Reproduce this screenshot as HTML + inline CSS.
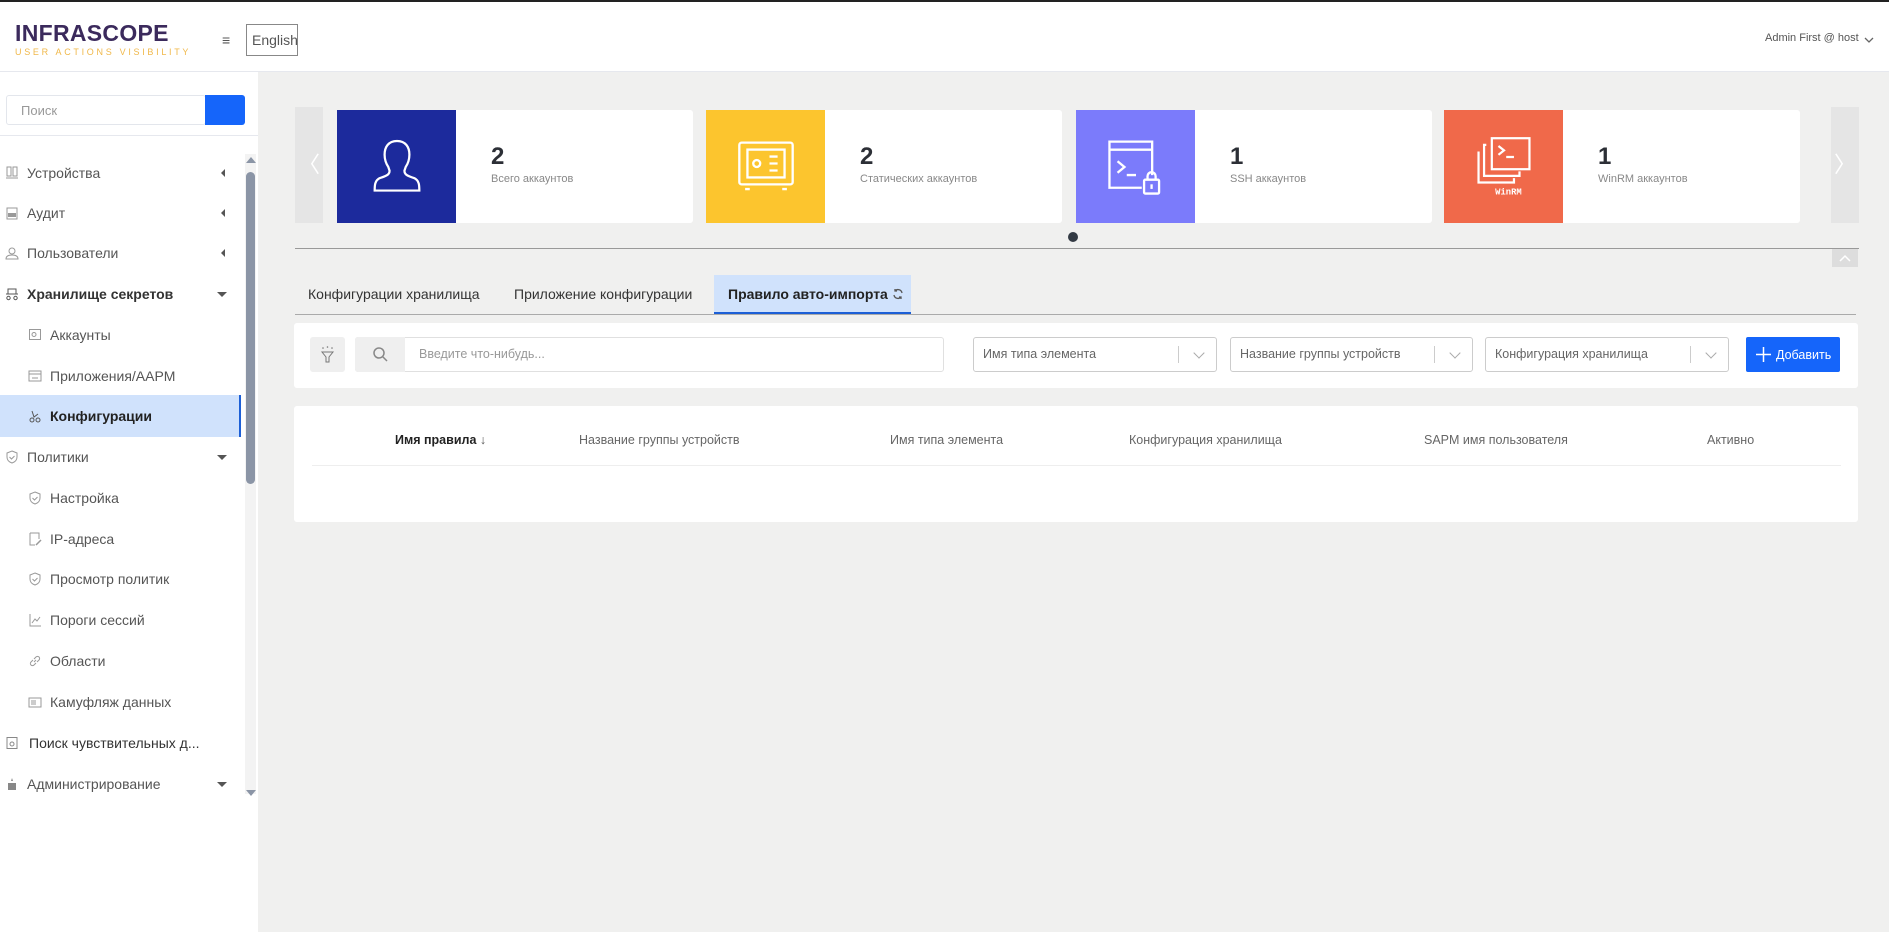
<!DOCTYPE html>
<html><head><meta charset="utf-8">
<style>
*{box-sizing:border-box;margin:0;padding:0}
body{width:1889px;height:932px;overflow:hidden;background:#f0f0ef;font-family:"Liberation Sans","DejaVu Sans",sans-serif;position:relative;color:#333}
.a{position:absolute}
.hdr{left:0;top:0;width:1889px;height:72px;background:#fff;border-top:2px solid #222;border-bottom:1px solid #e6e8ee}
.side{left:0;top:72px;width:258px;height:860px;background:#fff}
.mi{position:absolute;left:0;width:241px;height:40px;display:flex;align-items:center;font-size:14px;color:#555}
.mi svg{position:absolute;left:5px}
.mi span{position:absolute;left:27px}
.sub svg{left:28px}.sub span{left:50px}
.car{position:absolute;right:0;width:0;height:0;border-top:4px solid transparent;border-bottom:4px solid transparent;border-right:4px solid #555;left:221px}
.dn{position:absolute;left:217px;width:0;height:0;border-left:5px solid transparent;border-right:5px solid transparent;border-top:5px solid #555}
.card{top:110px;height:113px;width:356px;background:#fff;border-radius:3px}
.card .ic{position:absolute;left:0;top:0;width:119px;height:113px;display:flex;align-items:center;justify-content:center}
.card .n{position:absolute;left:154px;top:33px;font-size:24px;font-weight:bold;color:#2c2f36}
.card .l{position:absolute;left:154px;top:63px;font-size:11px;color:#888}
.sel{top:337px;height:35px;background:#fff;border:1px solid #ccc;border-radius:3px;font-size:12.5px;color:#666;padding:9px 9px}
.sel:after{content:"";position:absolute;right:37px;top:8px;height:17px;border-left:1px solid #ccc}
.sel i{position:absolute;right:13px;top:11px;width:8px;height:8px;border-right:1px solid #aaa;border-bottom:1px solid #aaa;transform:rotate(45deg)}
.th{top:433px;font-size:12.5px;color:#666}
.tab{top:286px;font-size:14px;color:#333}
</style></head><body>
<div class="a hdr">
 <div class="a" style="left:15px;top:18px;font-size:23px;font-weight:bold;color:#3b2a5c;letter-spacing:0.3px">INFRASCOPE</div>
 <div class="a" style="left:15px;top:45px;font-size:9px;color:#f0b84a;letter-spacing:2.7px">USER ACTIONS VISIBILITY</div>
 <div class="a" style="left:222px;top:30px;font-size:14px;color:#555">≡</div>
 <div class="a" style="left:246px;top:22px;width:52px;height:32px;border:1px solid #888;font-size:14px;color:#555;padding:7px 5px">English</div>
 <div class="a" style="left:1765px;top:30px;font-size:11px;color:#555">Admin First @ host</div>
 <svg class="a" style="left:1864px;top:34px" width="10" height="8"><path d="M1 2l4 4 4-4" stroke="#666" fill="none" stroke-width="1.3"/></svg>
</div>
<div class="a side">
 <div class="a" style="left:6px;top:23px;width:200px;height:30px;border:1px solid #e3e6ec;border-radius:3px;font-size:13px;color:#999;padding:7px 14px">Поиск</div>
 <div class="a" style="left:205px;top:23px;width:40px;height:30px;background:#1565fa;border-radius:0 3px 3px 0"></div>
 <div class="a" style="left:0;top:63px;width:258px;border-top:1px solid #e6e8ee"></div>
 <div class="a" style="left:245px;top:82px;width:11px;height:640px;background:#f3f3f3"></div>
 <div class="a" style="left:246px;top:100px;width:9px;height:312px;background:#8b95a6;border-radius:5px"></div>
 <div class="a" style="left:246px;top:85px;width:0;height:0;border-left:5px solid transparent;border-right:5px solid transparent;border-bottom:6px solid #8b95a6"></div>
 <div class="a" style="left:246px;top:718px;width:0;height:0;border-left:5px solid transparent;border-right:5px solid transparent;border-top:6px solid #8b95a6"></div>

 <div class="mi" style="top:81px"><svg width="14" height="14"><rect x="2" y="1" width="4" height="9" fill="none" stroke="#999"/><rect x="8" y="1" width="4" height="9" fill="none" stroke="#999"/><path d="M1 12h12" stroke="#999"/></svg><span>Устройства</span><div class="car" style="top:16px"></div></div>
 <div class="mi" style="top:121px"><svg width="14" height="14"><rect x="2" y="2" width="10" height="11" fill="none" stroke="#999"/><rect x="3" y="7" width="8" height="4" fill="#999"/></svg><span>Аудит</span><div class="car" style="top:16px"></div></div>
 <div class="mi" style="top:161px"><svg width="14" height="14"><circle cx="7" cy="5" r="3" fill="none" stroke="#999"/><path d="M1 13q0-4 6-4t6 4z" fill="none" stroke="#999"/></svg><span>Пользователи</span><div class="car" style="top:16px"></div></div>
 <div class="mi" style="top:202px;color:#333;font-weight:bold"><svg width="14" height="14"><path d="M3 2h8v5H3zM1 7h12" fill="none" stroke="#555"/><circle cx="3.5" cy="11" r="1.7" fill="none" stroke="#555"/><circle cx="10.5" cy="11" r="1.7" fill="none" stroke="#555"/></svg><span>Хранилище секретов</span><div class="dn" style="top:18px"></div></div>
 <div class="mi sub" style="top:243px"><svg width="14" height="14"><rect x="1.5" y="1.5" width="11" height="10" fill="none" stroke="#999"/><circle cx="6" cy="6.5" r="2" fill="none" stroke="#999"/></svg><span>Аккаунты</span></div>
 <div class="mi sub" style="top:284px"><svg width="14" height="14"><rect x="1" y="2" width="12" height="10" fill="none" stroke="#999"/><path d="M1 5h12M4 9h6" stroke="#999"/></svg><span>Приложения/AAPM</span></div>
 <div class="mi sub" style="top:323px;background:#d0e2fc;color:#222;font-weight:bold;border-right:2px solid #1c5fd6;height:42px"><svg width="14" height="14"><circle cx="4" cy="11" r="2" fill="none" stroke="#555"/><circle cx="10" cy="11" r="2" fill="none" stroke="#555"/><path d="M4 2l2 6 4-3" stroke="#555" fill="none"/></svg><span>Конфигурации</span></div>
 <div class="mi" style="top:365px"><svg width="14" height="14"><path d="M7 1l5 2v4c0 3-2 5-5 6-3-1-5-3-5-6V3z" fill="none" stroke="#999"/><path d="M4.5 7l2 2 3-3" fill="none" stroke="#999"/></svg><span>Политики</span><div class="dn" style="top:18px"></div></div>
 <div class="mi sub" style="top:406px"><svg width="14" height="14"><path d="M7 1l5 2v4c0 3-2 5-5 6-3-1-5-3-5-6V3z" fill="none" stroke="#999"/><path d="M4.5 7l2 2 3-3" fill="none" stroke="#999"/></svg><span>Настройка</span></div>
 <div class="mi sub" style="top:447px"><svg width="14" height="14"><path d="M2 1h9v6M2 1v12h5" fill="none" stroke="#999"/><path d="M8 13l5-5" stroke="#999" stroke-width="1.5"/></svg><span>IP-адреса</span></div>
 <div class="mi sub" style="top:487px"><svg width="14" height="14"><path d="M7 1l5 2v4c0 3-2 5-5 6-3-1-5-3-5-6V3z" fill="none" stroke="#999"/><path d="M4.5 7l2 2 3-3" fill="none" stroke="#999"/></svg><span>Просмотр политик</span></div>
 <div class="mi sub" style="top:528px"><svg width="14" height="14"><path d="M2 1v12h11M4 10l3-4 2 2 3-4" fill="none" stroke="#999"/></svg><span>Пороги сессий</span></div>
 <div class="mi sub" style="top:569px"><svg width="14" height="14"><path d="M6 8l2-2M5 6L3 8a2 2 0 003 3l2-2M9 8l2-2a2 2 0 00-3-3L6 5" fill="none" stroke="#999"/></svg><span>Области</span></div>
 <div class="mi sub" style="top:610px"><svg width="14" height="14"><rect x="1" y="3" width="12" height="9" fill="none" stroke="#999"/><rect x="3" y="5" width="5" height="5" fill="#ccc"/></svg><span>Камуфляж данных</span></div>
 <div class="mi" style="top:651px;color:#333"><svg width="14" height="14"><rect x="2" y="1.5" width="10" height="11" fill="none" stroke="#888"/><circle cx="7" cy="8" r="2" fill="none" stroke="#888"/></svg><span style="left:29px">Поиск чувствительных д...</span></div>
 <div class="mi" style="top:692px"><svg width="14" height="14"><path d="M7 1l1 3H6zM3 6h8v7H3z" fill="#888"/></svg><span>Администрирование</span><div class="dn" style="top:18px"></div></div>
</div>

<!-- carousel -->
<div class="a" style="left:295px;top:107px;width:28px;height:116px;background:#e5e5e5;color:#fff;font-size:22px;text-align:center;line-height:116px">〈</div>
<div class="a" style="left:1831px;top:107px;width:28px;height:116px;background:#e5e5e5;color:#fff;font-size:22px;text-align:center;line-height:116px">〉</div>

<div class="a card" style="left:337px"><div class="ic" style="background:#1c2a9c"><svg width="62" height="62" viewBox="0 0 50 50"><path d="M25 4c-7 0-10 5-10 11 0 4 1 7 3 10l1 3c0 3-2 4-8 6-4 2-4 6-4 10h36c0-4 0-8-4-10-6-2-8-3-8-6l1-3c2-3 3-6 3-10 0-6-3-11-10-11z" fill="none" stroke="#fff" stroke-width="1.8"/></svg></div><div class="n">2</div><div class="l">Всего аккаунтов</div></div>
<div class="a card" style="left:706px"><div class="ic" style="background:#fcc52e"><svg width="58" height="54" viewBox="0 0 50 46"><rect x="2" y="2" width="46" height="36" rx="2" fill="none" stroke="#fff" stroke-width="2"/><rect x="9" y="8" width="32" height="24" fill="none" stroke="#fff" stroke-width="2"/><circle cx="17" cy="20" r="3" fill="none" stroke="#fff" stroke-width="2"/><path d="M28 14h7M28 20h7M28 26h7M7 42h4M39 42h4" stroke="#fff" stroke-width="2"/></svg></div><div class="n">2</div><div class="l">Статических аккаунтов</div></div>
<div class="a card" style="left:1076px"><div class="ic" style="background:#7b7bfb"><svg width="60" height="58" viewBox="0 0 52 50"><path d="M40 32V3H3v40h28M3 10h37" fill="none" stroke="#fff" stroke-width="2"/><path d="M10 20l6 5-6 5M18 32h8" fill="none" stroke="#fff" stroke-width="2"/><rect x="33" y="36" width="13" height="12" rx="1" fill="none" stroke="#fff" stroke-width="2"/><path d="M36 36v-3a3.5 3.5 0 017 0v3" fill="none" stroke="#fff" stroke-width="2"/><path d="M39.5 40v4" stroke="#fff" stroke-width="2"/></svg></div><div class="n">1</div><div class="l">SSH аккаунтов</div></div>
<div class="a card" style="left:1444px"><div class="ic" style="background:#f0694a"><svg width="58" height="62" viewBox="0 0 52 56"><rect x="15" y="2" width="34" height="28" fill="none" stroke="#fff" stroke-width="2"/><path d="M10 8H8v28h32v-4M3 14v28h32v-4" fill="none" stroke="#fff" stroke-width="2"/><path d="M21 9l5 4-5 4M28 19h7" fill="none" stroke="#fff" stroke-width="2"/><text x="30" y="53" font-size="8" fill="#fff" font-family="Liberation Mono,monospace" font-weight="bold" text-anchor="middle">WinRM</text></svg></div><div class="n">1</div><div class="l">WinRM аккаунтов</div></div>

<div class="a" style="left:1068px;top:232px;width:10px;height:10px;border-radius:50%;background:#333a44"></div>
<div class="a" style="left:295px;top:248px;width:1564px;border-top:1px solid #999"></div>
<div class="a" style="left:1832px;top:249px;width:26px;height:18px;background:#ddd"><svg width="26" height="18"><path d="M8 12l5-5 5 5" stroke="#fff" fill="none" stroke-width="1.5"/></svg></div>

<!-- tabs -->
<div class="a tab" style="left:308px">Конфигурации хранилища</div>
<div class="a tab" style="left:514px">Приложение конфигурации</div>
<div class="a" style="left:714px;top:275px;width:197px;height:39px;background:#d0e2fc;border-bottom:2px solid #1c5fd6"></div>
<div class="a tab" style="left:728px;font-weight:bold;color:#222">Правило авто-импорта <svg width="12" height="12" style="vertical-align:-1px"><path d="M10 5a4 4 0 00-7-2M2 7a4 4 0 007 2" fill="none" stroke="#555" stroke-width="1.3"/><path d="M3 1v2h2M9 11V9H7" fill="none" stroke="#555" stroke-width="1.3"/></svg></div>
<div class="a" style="left:295px;top:314px;width:1561px;border-top:1px solid #aaa"></div>

<!-- filter panel -->
<div class="a" style="left:294px;top:323px;width:1564px;height:65px;background:#fff;border-radius:3px"></div>
<div class="a" style="left:310px;top:337px;width:35px;height:35px;background:#efefef;border-radius:3px"><svg width="35" height="35"><path d="M12 15h11l-4 5v5h-3v-5z" fill="none" stroke="#777"/><circle cx="13" cy="11" r=".8" fill="#777"/><circle cx="17.5" cy="10" r=".8" fill="#777"/><circle cx="22" cy="11" r=".8" fill="#777"/></svg></div>
<div class="a" style="left:355px;top:337px;width:589px;height:35px;border:1px solid #e0e0e0;border-radius:3px;background:#fff"></div>
<div class="a" style="left:355px;top:337px;width:50px;height:35px;background:#efefef;border-radius:3px 0 0 3px"><svg width="50" height="35"><circle cx="24" cy="16" r="5" fill="none" stroke="#888" stroke-width="1.5"/><path d="M28 20l4 4" stroke="#888" stroke-width="1.5"/></svg></div>
<div class="a" style="left:419px;top:347px;font-size:12.5px;color:#999">Введите что-нибудь...</div>
<div class="a sel" style="left:973px;width:244px">Имя типа элемента<i></i></div>
<div class="a sel" style="left:1230px;width:243px">Название группы устройств<i></i></div>
<div class="a sel" style="left:1485px;width:244px">Конфигурация хранилища<i></i></div>
<div class="a" style="left:1746px;top:337px;width:94px;height:35px;background:#1565fa;border-radius:2px;color:#fff;font-size:12.5px;padding:11px 0 0 30px"><svg class="a" style="left:10px;top:10px" width="15" height="15"><path d="M7.5 0v15M0 7.5h15" stroke="#fff" stroke-width="1.5"/></svg>Добавить</div>

<!-- table -->
<div class="a" style="left:294px;top:406px;width:1564px;height:116px;background:#fff;border-radius:3px"></div>
<div class="a th" style="left:395px;color:#222;font-weight:bold">Имя правила <span style="font-weight:normal;color:#555">↓</span></div>
<div class="a th" style="left:579px">Название группы устройств</div>
<div class="a th" style="left:890px">Имя типа элемента</div>
<div class="a th" style="left:1129px">Конфигурация хранилища</div>
<div class="a th" style="left:1424px">SAPM имя пользователя</div>
<div class="a th" style="left:1707px">Активно</div>
<div class="a" style="left:312px;top:465px;width:1529px;border-top:1px solid #eee"></div>
</body></html>
